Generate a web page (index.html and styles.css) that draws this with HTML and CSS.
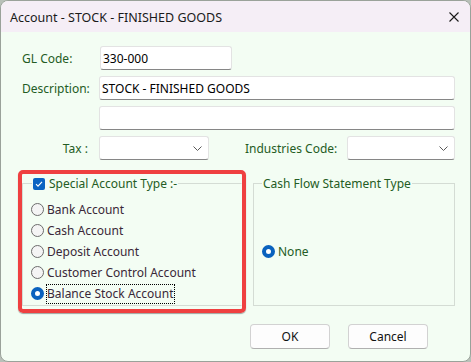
FILE: index.html
```html
<!DOCTYPE html>
<html>
<head>
<meta charset="utf-8">
<link rel="stylesheet" href="styles.css">
</head>
<body>
<div class="window">
  <div class="titlebar">
    <span class="title">Account - STOCK - FINISHED GOODS</span>
    <svg class="close" width="10" height="10" viewBox="0 0 10 10"><path d="M0.5 0.5L9.5 9.5M9.5 0.5L0.5 9.5" stroke="#1a1a1a" stroke-width="1.1" fill="none"/></svg>
  </div>
  <div class="content">
    <div class="form">
      <span class="lbl">GL Code:</span>
      <div class="input gl">330-000</div>
      <span class="lbl">Description:</span>
      <div class="input wide">STOCK - FINISHED GOODS</div>
      <span></span>
      <div class="input wide"></div>
      <span class="lbl tax-lbl">Tax :</span>
      <div class="taxrow">
        <div class="combo tax">
          <svg class="chev" width="9" height="5" viewBox="0 0 9 5"><path d="M0.5 0.5L4.5 4.5L8.5 0.5" stroke="#5a5a5a" stroke-width="1" fill="none"/></svg>
        </div>
        <span class="lbl ind-lbl">Industries Code:</span>
        <div class="combo ind">
          <svg class="chev" width="9" height="5" viewBox="0 0 9 5"><path d="M0.5 0.5L4.5 4.5L8.5 0.5" stroke="#5a5a5a" stroke-width="1" fill="none"/></svg>
        </div>
      </div>
    </div>
    <div class="groups">
      <div class="redbox">
        <fieldset class="group special">
          <legend class="legend-special"><span class="check"><svg width="12" height="12" viewBox="0 0 12 12"><path d="M3 6.2L5 8.2L9 3.8" stroke="#fff" stroke-width="1.1" fill="none"/></svg></span><span class="gtext">Special Account Type :-</span></legend>
          <div class="radios">
            <div class="radio"><span class="rb"></span><span class="rtext">Bank Account</span></div>
            <div class="radio"><span class="rb"></span><span class="rtext">Cash Account</span></div>
            <div class="radio"><span class="rb"></span><span class="rtext">Deposit Account</span></div>
            <div class="radio"><span class="rb"></span><span class="rtext">Customer Control Account</span></div>
            <div class="radio"><span class="rb on"></span><span class="rtext focus">Balance Stock Account</span></div>
          </div>
        </fieldset>
      </div>
      <fieldset class="group cash">
        <legend class="legend-cash">Cash Flow Statement Type</legend>
        <div class="radio none"><span class="rb on"></span><span class="gtext">None</span></div>
      </fieldset>
    </div>
    <div class="buttons">
      <div class="btn">OK</div>
      <div class="btn">Cancel</div>
    </div>
  </div>
</div>
</body>
</html>
```

FILE: styles.css
```css
* { box-sizing: border-box; }
html, body {
  margin: 0;
  padding: 0;
  background: #b8c0b8;
}
body {
  width: 471px;
  height: 362px;
  overflow: hidden;
  font-family: "Noto Sans", "Open Sans", sans-serif;
  font-size: 12px;
  color: #000;
}
.window {
  width: 471px;
  height: 362px;
  border: 1px solid #9aa29a;
  border-radius: 8px;
  overflow: hidden;
  background: #f3fdf3;
  display: flex;
  flex-direction: column;
}
.titlebar {
  height: 31px;
  flex: 0 0 31px;
  background: #f5eef6;
  display: flex;
  align-items: center;
  padding-left: 9px;
  padding-right: 11px;
}
.title {
  flex: 1;
  color: #1a1a1a;
  font-size: 12.5px;
  padding-top: 1px;
}
.close { display: block; margin-top: 0px; }
.content {
  padding: 14px 0 0 17px;
  flex: 1;
}
.form {
  margin-left: 4px;
  display: grid;
  grid-template-columns: 77px 356px;
  grid-auto-rows: 24px;
  row-gap: 6px;
  align-items: center;
}
.lbl {
  color: #245c24;
  white-space: nowrap;
}
.tax-lbl {
  text-align: right;
  padding-right: 11px;
}
.input {
  height: 24px;
  background: #fff;
  border: 1px solid #e3e3e3;
  border-bottom: 1px solid #868686;
  border-radius: 3px;
  display: flex;
  align-items: center;
  padding-left: 2px;
  white-space: nowrap;
}
.gl {
  width: 132px;
  margin-left: 1px;
}
.wide { width: 356px; }
.taxrow {
  display: flex;
  align-items: center;
  height: 24px;
}
.combo {
  height: 24px;
  background: #fff;
  border: 1px solid #e3e3e3;
  border-bottom: 1px solid #868686;
  border-radius: 3px;
  display: flex;
  align-items: center;
  justify-content: flex-end;
  padding-right: 6px;
}
.tax { width: 110px; }
.ind-lbl { margin-left: 36px; width: 102px; }
.ind { width: 108px; }
.chev { display: block; }
.groups {
  margin-top: 10px;
  display: flex;
  align-items: flex-start;
}
.redbox {
  width: 228px;
  height: 143px;
  border: 4px solid #ef4040;
  border-radius: 5px;
  box-shadow: 0 1px 1px rgba(0,0,0,0.35);
  padding-top: 1px;
}
.group {
  margin: 0;
  border: 1px solid #d4dcd4;
  padding: 0 0 0 8px;
  height: 131px;
  min-width: 0;
}
.special {
  width: 220px;
  border-right-color: transparent;
}
.cash {
  width: 202px;
  margin-left: 7px;
  margin-top: 5px;
}
legend {
  padding: 0 1px;
  height: 17px;
  line-height: 17px;
  display: flex;
  align-items: center;
}
.legend-special { margin-left: 1px; }
.legend-cash { color: #245c24; }
.gtext { color: #245c24; }
.check {
  width: 12px;
  height: 12px;
  background: #0a64c2;
  border-radius: 2px;
  margin-right: 4px;
  display: block;
}
.check svg { display: block; }
.radios {
  margin-top: 7px;
}
.radio {
  height: 21px;
  display: flex;
  align-items: center;
}
.rb {
  width: 13px;
  height: 13px;
  border-radius: 50%;
  border: 1px solid #6c6c6c;
  background: #f4f4f4;
  margin-right: 3px;
  flex: 0 0 13px;
}
.rb.on {
  border: 4px solid #0a62be;
  background: #fff;
}
.rtext {
  color: #3a2838;
  white-space: nowrap;
}
.focus {
  outline: 1px dotted #000;
  outline-offset: 0;
  height: 18px;
  line-height: 17px;
  padding: 0 0 0 0;
}
.none {
  margin-top: 49px;
}
.buttons {
  margin-top: 11px;
  display: flex;
  justify-content: flex-end;
  gap: 18px;
  padding-right: 42px;
}
.btn {
  width: 80px;
  height: 25px;
  background: #fdfdfd;
  border: 1px solid #d2d2d2;
  border-bottom-color: #b0b0b0;
  border-radius: 4px;
  display: flex;
  align-items: center;
  justify-content: center;
  color: #111;
}
```
